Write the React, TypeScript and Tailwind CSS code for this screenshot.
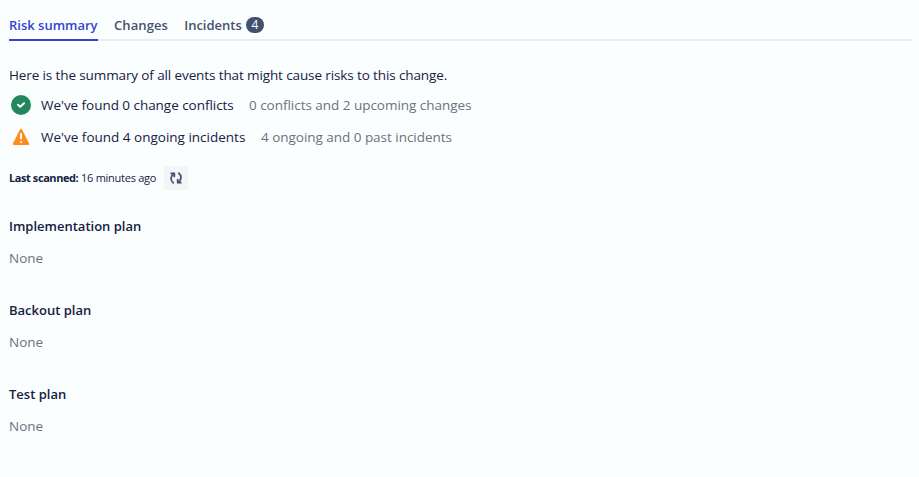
function Tabs() {
  return (
    <div role="tablist" className="mr-2 ml-[9px] flex h-[41px] border-b-2 border-[#ebecf0] text-[13px] leading-5 font-semibold text-[#44526e]">
      <button role="tab" className="-mb-[2px] flex w-[89px] border-b-2 border-[#3443d2] pt-[15px] whitespace-nowrap text-[#3443d2]">
        Risk summary
      </button>
      <button role="tab" className="ml-4 flex w-[54px] pt-[15px] whitespace-nowrap tracking-[0.1px]">
        Changes
      </button>
      <button role="tab" className="ml-4 flex w-20 gap-1 pt-[15px] whitespace-nowrap">
        <span className="w-[58px] shrink-0">Incidents</span>
        <span className="mt-[2px] flex h-4 w-[18px] items-center justify-center rounded-full bg-[#42526e] text-[12px] leading-4 font-normal text-white">4</span>
      </button>
    </div>
  );
}

function CheckIcon() {
  return (
    <svg width="20" height="20" viewBox="0 0 20 20" className="shrink-0">
      <circle cx="10" cy="10" r="10" fill="#22875a" />
      <path d="M7 9.7l2.2 2.2 3.8-3.7" fill="none" stroke="#fff" strokeWidth="2" strokeLinecap="round" strokeLinejoin="round" />
    </svg>
  );
}

function WarningIcon() {
  return (
    <svg width="20" height="20" viewBox="0 0 20 20" className="shrink-0">
      <path d="M9.1 2.3c.4-.8 1.4-.8 1.8 0l7.2 14.3c.4.8 0 1.4-.9 1.4H2.8c-.9 0-1.3-.6-.9-1.4z" fill="#ff8b1f" />
      <path d="M10 7v4.6" stroke="#fff" strokeWidth="2" strokeLinecap="round" />
      <circle cx="10" cy="15" r="1.1" fill="#fff" />
    </svg>
  );
}

function RefreshIcon() {
  return (
    <svg width="16" height="16" viewBox="0 0 16 16" fill="none" stroke="#42526e" strokeWidth="1.8" strokeLinecap="round" strokeLinejoin="round">
      <path d="M5.2 12.7C2.3 10.6 2.3 6.2 5.6 3.8" />
      <path d="M3.2 3.3h3.1v3.1" />
      <path d="M10.8 3.3C13.7 5.4 13.7 9.8 10.4 12.2" />
      <path d="M12.8 12.7H9.7V9.6" />
    </svg>
  );
}

function Plan({ title }: { title: string }) {
  return (
    <section className="h-[84px]">
      <h2 className="text-[13px] leading-5 font-semibold">{title}</h2>
      <p className="mt-3 text-[#6b7280]">None</p>
    </section>
  );
}

export default function App() {
  return (
    <main className="h-[477px] w-[919px] overflow-hidden bg-[#fafefe] font-['Open_Sans','Noto_Sans',sans-serif] text-[13.5px] leading-5 text-[#172042]">
      <Tabs />
      <div className="pt-[24px] pl-[9px]">
        <p className="whitespace-nowrap tracking-[-0.115px]">
          Here is the summary of all events that might cause risks to this change.
        </p>
        <div className="mt-[10px] flex items-center pl-[2px]">
          <CheckIcon />
          <span className="ml-[10px] w-[193px] whitespace-nowrap tracking-[-0.04px]">We've found 0 change conflicts</span>
          <span className="ml-[15px] whitespace-nowrap tracking-[-0.03px] text-[#6b7280]">0 conflicts and 2 upcoming changes</span>
        </div>
        <div className="mt-3 flex items-center pl-[2px]">
          <WarningIcon />
          <span className="ml-[10px] w-[205px] whitespace-nowrap">We've found 4 ongoing incidents</span>
          <span className="ml-[15px] whitespace-nowrap tracking-[-0.03px] text-[#6b7280]">4 ongoing and 0 past incidents</span>
        </div>
        <div className="mt-[19px] flex h-6 items-center text-[11px]">
          <span className="w-[69px] whitespace-nowrap font-bold tracking-[-0.42px]">Last scanned:</span>
          <span className="ml-[3px] w-[75px] whitespace-nowrap tracking-[-0.26px]">16 minutes ago</span>
          <button aria-label="Rescan" className="ml-2 flex h-6 w-6 items-center justify-center rounded-[3px] bg-[#f4f5f7]">
            <RefreshIcon />
          </button>
        </div>
        <div className="mt-[26px]">
          <Plan title="Implementation plan" />
          <Plan title="Backout plan" />
          <Plan title="Test plan" />
        </div>
      </div>
    </main>
  );
}
